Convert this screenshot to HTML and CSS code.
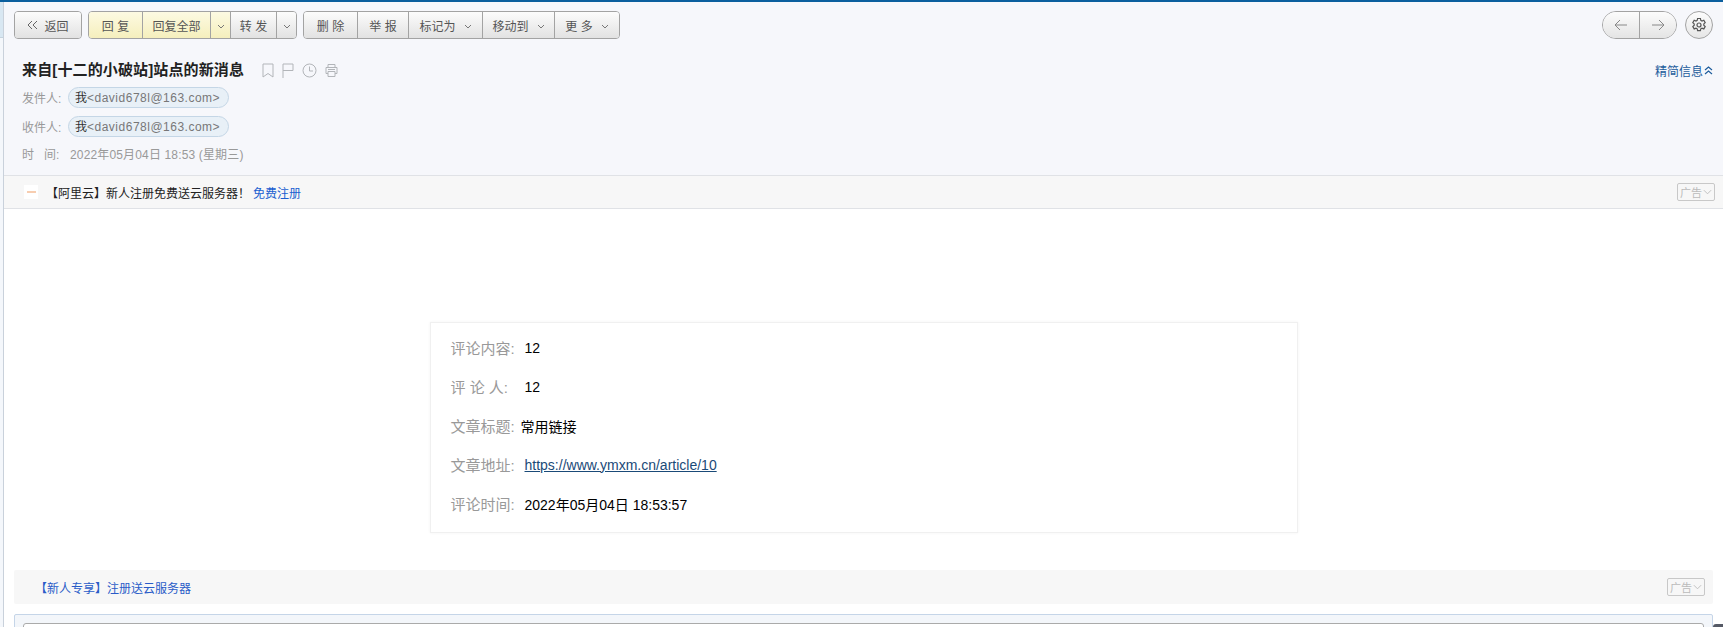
FILE: index.html
```html
<!DOCTYPE html>
<html lang="zh-CN">
<head>
<meta charset="utf-8">
<title>来自[十二的小破站]站点的新消息</title>
<link rel="stylesheet" href="styles.css">
</head>
<body>
<div class="app">
  <aside class="strip"><div class="strip-top"></div></aside>
  <main class="main">
    <header class="head">
      <div class="toolbar">
        <div class="group"><button class="btn w68"><svg class="ic-back" viewBox="0 0 11 10"><path d="M5 1 1 5l4 4M10 1 6 5l4 4"/></svg>返回</button></div>
        <div class="group">
          <button class="btn yellow w54">回 复</button>
          <button class="btn yellow w68">回复全部</button>
          <button class="btn yellow w20"><svg class="caret" viewBox="0 0 8 5"><path d="M1 1l3 3 3-3"/></svg></button>
          <button class="btn w47">转 发</button>
          <button class="btn w20"><svg class="caret" viewBox="0 0 8 5"><path d="M1 1l3 3 3-3"/></svg></button>
        </div>
        <div class="group">
          <button class="btn w54">删 除</button>
          <button class="btn w51">举 报</button>
          <button class="btn w74">标记为<svg class="caret gap" viewBox="0 0 8 5"><path d="M1 1l3 3 3-3"/></svg></button>
          <button class="btn w72">移动到<svg class="caret gap" viewBox="0 0 8 5"><path d="M1 1l3 3 3-3"/></svg></button>
          <button class="btn w66">更 多<svg class="caret gap" viewBox="0 0 8 5"><path d="M1 1l3 3 3-3"/></svg></button>
        </div>
        <div class="tool-right">
          <div class="pager">
            <button class="pg"><svg class="arrow" viewBox="0 0 14 12"><path d="M13 6H1M6 1 1 6l5 5"/></svg></button>
            <button class="pg"><svg class="arrow" viewBox="0 0 14 12"><path d="M1 6h12M8 1l5 5-5 5"/></svg></button>
          </div>
          <button class="gear"><svg viewBox="0 0 16 16"><path d="M6.6 1.5h2.8l.4 1.9 1.2.6 1.8-.8 1.4 2.4-1.4 1.3v1.3l1.4 1.3-1.4 2.4-1.8-.8-1.2.7-.4 1.9H6.6l-.4-1.9-1.2-.7-1.8.8-1.4-2.4 1.400-1.300V6.900L1.800 5.600l1.400-2.400 1.800.8 1.200-.6z"/><circle cx="8" cy="8" r="2"/></svg></button>
        </div>
      </div>
      <div class="subject-row">
        <h1 class="subject">来自[十二的小破站]站点的新消息</h1>
        <div class="subject-icons">
          <svg class="si w12" viewBox="0 0 12 15"><path d="M1 1h10v13L6 10.500 1 14z"/></svg>
          <svg class="si w12" viewBox="0 0 12 15"><path d="M1 15V1h10v6.500H1"/></svg>
          <svg class="si w15" viewBox="0 0 15 15"><circle cx="7.500" cy="7.500" r="6.500"/><path d="M7.500 3.500v4.500H11"/></svg>
          <svg class="si w13" viewBox="0 0 13 14"><path d="M3 4V1h7v3M3 10H1V4h11v6h-2M3 8h7v5H3zM3 6h7"/></svg>
        </div>
        <a class="brief">精简信息<svg class="dbl" viewBox="0 0 9 9"><path d="M1 4l3.500-3L8 4M1 8l3.500-3L8 8"/></svg></a>
      </div>
      <div class="meta-row"><span class="meta-label">发件人:</span><span class="chip"><b class="me">我</b>&lt;david678l@163.com&gt;</span></div>
      <div class="meta-row"><span class="meta-label">收件人:</span><span class="chip"><b class="me">我</b>&lt;david678l@163.com&gt;</span></div>
      <div class="meta-time"><span class="time-label">时&nbsp;&nbsp;&nbsp;间:</span>2022年05月04日 18:53 (星期三)</div>
    </header>
    <div class="adbar">
      <span class="ad-logo"><i></i></span>
      <span class="ad-text">【阿里云】新人注册免费送云服务器！</span>
      <a class="ad-link">免费注册</a>
      <span class="ad-tag">广告<svg viewBox="0 0 10 6"><path d="M1 1l4 4 4-4"/></svg></span>
    </div>
    <section class="mail">
      <div class="card">
        <div class="row"><span class="lab">评论内容:</span><span class="val">12</span></div>
        <div class="row"><span class="lab">评 论 人:</span><span class="val">12</span></div>
        <div class="row"><span class="lab short">文章标题:</span><span class="val">常用链接</span></div>
        <div class="row"><span class="lab">文章地址:</span><a class="val link">https://www.ymxm.cn/article/10</a></div>
        <div class="row"><span class="lab">评论时间:</span><span class="val">2022年05月04日 18:53:57</span></div>
      </div>
    </section>
    <div class="ad2">
      <a class="ad2-text">【新人专享】注册送云服务器</a>
      <span class="ad-tag">广告<svg viewBox="0 0 10 6"><path d="M1 1l4 4 4-4"/></svg></span>
    </div>
    <div class="reply"><div class="reply-inner"></div></div>
  </main>
</div>
<div class="corner"></div>
</body>
</html>
```

FILE: styles.css
```css
* { box-sizing: border-box; }
html, body { margin: 0; height: 627px; overflow: hidden; background: #fff; }
body { font-family: "Liberation Sans", "Noto Sans CJK SC", sans-serif; font-size: 12px; color: #333; position: relative; }
button { font: inherit; margin: 0; padding: 0; }
.app { display: flex; height: 627px; border-top: 2px solid #0b5f9e; }
.strip { width: 4px; flex: none; background: #f4f7fb; border-right: 1px solid #c9d1db; }
.strip-top { height: 36px; background: #d8e7f2; border-bottom: 1px solid #c5d3de; }
.main { flex: 1; min-width: 0; display: flex; flex-direction: column; }
.head { height: 173px; flex: none; background: #f6f7fb; padding: 9px 10px 0 10px; }
.toolbar { display: flex; gap: 6px; height: 28px; }
.group { display: flex; border: 1px solid #a3a3a3; border-radius: 4px; overflow: hidden; height: 28px; }
.btn { height: 26px; border: 0; border-left: 1px solid #a3a3a3; background: linear-gradient(#fcfcfc, #e2e2e2); color: #555; display: flex; align-items: center; justify-content: center; }
.btn:first-child { border-left: 0; }
.yellow { background: linear-gradient(#fdfae2, #f5efbd); }
.w68 { width: 68px; }
.group:first-child .w68 { width: 66px; }
.w54 { width: 53px; }
.w20 { width: 20px; }
.w47 { width: 46px; }
.w51 { width: 51px; }
.w74 { width: 74px; }
.w72 { width: 72px; }
.w66 { width: 65px; }
.ic-back { width: 11px; height: 10px; margin-right: 6px; fill: none; stroke: #666; stroke-width: 1; }
.caret { width: 8px; height: 5px; fill: none; stroke: #777; stroke-width: 1; margin-top: 2px; }
.caret.gap { margin-left: 8px; }
.tool-right { margin-left: auto; display: flex; gap: 8px; }
.pager { display: flex; width: 75px; height: 28px; border: 1px solid #a3a3a3; border-radius: 14px; overflow: hidden; }
.pg { flex: 1; border: 0; background: linear-gradient(#fcfcfc, #e4e4e4); display: flex; align-items: center; justify-content: center; }
.pg + .pg { border-left: 1px solid #a3a3a3; }
.arrow { width: 14px; height: 12px; fill: none; stroke: #888; stroke-width: 1; }
.gear { width: 28px; height: 28px; border: 1px solid #a3a3a3; border-radius: 50%; background: linear-gradient(#fcfcfc, #e6e6e6); display: flex; align-items: center; justify-content: center; }
.gear svg { width: 16px; height: 16px; fill: none; stroke: #555; stroke-width: 1.200; }
.subject-row { display: flex; align-items: center; height: 20px; margin-top: 21px; padding-left: 8px; }
.subject { margin: 0; font-size: 15px; letter-spacing: .13px; font-weight: bold; color: #222; line-height: 20px; }
.subject-icons { display: flex; align-items: center; gap: 8px; margin-left: 18px; }
.si { height: 15px; fill: none; stroke: #b2b5b9; stroke-width: 1; }
.si.w12 { width: 12px; }
.si.w15 { width: 15px; }
.si.w13 { width: 13px; }
.brief { margin-left: auto; color: #1c5c9c; display: flex; align-items: center; gap: 1px; }
.dbl { width: 9px; height: 9px; fill: none; stroke: #1c5c9c; stroke-width: 1.200; }
.meta-row { display: flex; align-items: center; height: 21px; margin-top: 8px; padding-left: 8px; color: #999; }
.subject-row + .meta-row { margin-top: 7px; }
.meta-label { width: 46px; }
.chip { height: 21px; width: 161px; border: 1px solid #c4d6e6; border-radius: 11px; background: #e8f0f7; color: #777; padding-left: 6px; line-height: 20px; white-space: nowrap; letter-spacing: .5px; }
.me { font-weight: normal; color: #333; letter-spacing: 0; }
.meta-time { margin-top: 9px; padding-left: 8px; color: #999; line-height: 18px; letter-spacing: .15px; }
.time-label { display: inline-block; width: 48px; letter-spacing: 0; }
.adbar { height: 34px; flex: none; display: flex; align-items: center; background: #f7f7f7; border-top: 1px solid #e0e2e6; border-bottom: 1px solid #e0e2e6; padding: 0 8px 0 20px; }
.ad-logo { width: 14px; height: 14px; background: #fff; display: flex; align-items: center; justify-content: center; }
.ad-logo i { width: 9px; height: 2px; background: #f7cdb0; }
.ad-text { margin-left: 8px; color: #222; }
.ad-link { margin-left: 3px; color: #1a5fd0; }
.ad-tag { margin-left: auto; width: 38px; height: 18px; border: 1px solid #c8c8c8; border-radius: 2px; color: #bbb; font-size: 11px; display: flex; align-items: center; justify-content: center; gap: 1px; }
.ad-tag svg { width: 9px; height: 6px; fill: none; stroke: #bbb; stroke-width: 1; }
.mail { flex: none; height: 361px; padding-top: 113px; }
.card { width: 868px; height: 211px; margin: 0 auto; border: 1px solid #f0f0f0; box-shadow: 0 0 3px rgba(0,0,0,.05); padding: 5px 20px; font-size: 14px; }
.row { height: 39px; display: flex; align-items: center; }
.lab { width: 74px; color: #999; flex: none; font-size: 15px; }
.lab.short { width: 70px; }
.val { color: #000; }
.link { color: #1a4a78; text-decoration: underline; }
.ad2 { flex: none; height: 34px; margin: 0 10px; background: #f7f7f7; border-radius: 2px; display: flex; align-items: center; padding: 0 8px 0 21px; }
.ad2-text { color: #2a5cc8; }
.reply { flex: none; height: 40px; margin: 10px 10px 0; border: 1px solid #c5d5e8; background: #f3f6fa; border-radius: 2px; padding: 8px 8px 0; }
.reply-inner { height: 30px; border: 1px solid #aaa; border-radius: 3px 3px 0 0; background: #fff; }
.corner { position: absolute; right: 0; top: 624px; width: 10px; height: 3px; background: #555a66; border-radius: 3px 0 0 0; }
```
